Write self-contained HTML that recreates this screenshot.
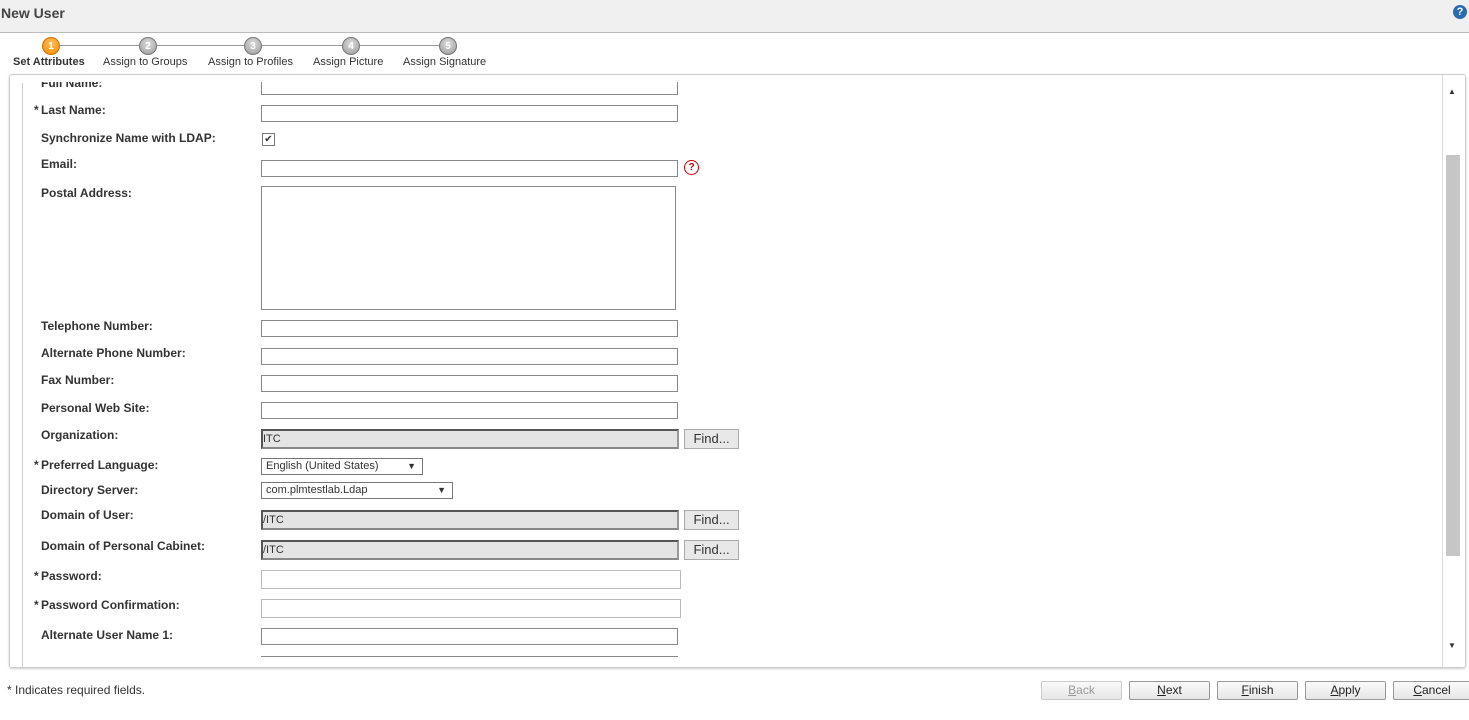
<!DOCTYPE html><html><head><style>
body{margin:0;width:1469px;height:720px;background:#fff;font-family:"Liberation Sans",Arial,sans-serif;position:relative;overflow:hidden;color:#333}
.a{position:absolute}
.hdr{left:0;top:0;width:1469px;height:32px;background:#f0f0f0;border-bottom:1px solid #bbb}
.l{position:absolute;left:41px;font-size:12px;font-weight:bold;color:#333}
.req::before{content:"*";position:absolute;left:-7px;font-weight:bold}
.i{position:absolute;left:261px;width:415px;height:15px;border:1px solid #888;background:#fff}
.g{position:absolute;left:261px;width:414px;height:16px;border:2px solid #555;border-right-color:#999;border-bottom-color:#888;background:#e4e4e4;font-size:11px;line-height:17px}
.f{position:absolute;left:684px;width:53px;height:18px;border:1px solid #aaa;background:#e8e8e8;font-size:13px;text-align:center;line-height:18px;color:#333}
.s{position:absolute;left:261px;height:15px;border:1px solid #777;background:#fff;font-size:11px;line-height:15px;padding-left:4px;box-sizing:content-box}
.s span{position:absolute;right:6px;font-size:9px}
.st{position:absolute;top:37px;width:18px;height:18px;border-radius:50%;background:radial-gradient(circle at 50% 35%,#ddd,#999);border:1px solid #777;font-size:10px;font-weight:bold;color:#fff;text-align:center;line-height:18px;box-sizing:border-box}
.sl{position:absolute;top:56px;font-size:11px;color:#333}
.b{position:absolute;top:681px;height:17px;width:79px;border:1px solid #999;border-radius:2px;background:linear-gradient(#fafafa,#e6e6e6);font-size:12px;text-align:center;line-height:17px;color:#222}
</style></head><body>
<div class="a hdr"></div>
<div class="a" style="left:1px;top:5px;font-size:14px;font-weight:bold;color:#444">New User</div>
<div class="a" style="left:1453px;top:5px;width:14px;height:14px;border-radius:50%;background:#2a6ab0;color:#fff;font-size:11px;font-weight:bold;text-align:center;line-height:14px">?</div>
<div class="a" style="left:52px;top:45px;width:395px;height:1px;background:#999"></div>
<div class="st" style="left:42px;background:radial-gradient(circle at 50% 35%,#ffc060,#f08a00);border-color:#d07000">1</div>
<div class="st" style="left:139px">2</div>
<div class="st" style="left:244px">3</div>
<div class="st" style="left:342px">4</div>
<div class="st" style="left:439px">5</div>
<div class="sl" style="left:13px;font-weight:bold">Set Attributes</div>
<div class="sl" style="left:103px">Assign to Groups</div>
<div class="sl" style="left:208px">Assign to Profiles</div>
<div class="sl" style="left:313px">Assign Picture</div>
<div class="sl" style="left:403px">Assign Signature</div>
<div class="a" style="left:9px;top:74px;width:1455px;height:592px;border:1px solid #ccc;border-radius:3px;box-shadow:0 1px 2px #ccc;overflow:hidden">
 <div class="a" style="left:12px;top:8px;width:1px;height:584px;background:#ccc"></div>
 <div class="a" style="left:1432px;top:0;width:22px;height:592px;background:#fff;border-left:1px solid #ddd"></div>
 <div class="a" style="left:1436px;top:80px;width:14px;height:401px;background:#c6c6c6"></div>
 <div class="a" style="left:1438px;top:12px;font-size:8px">▲</div>
 <div class="a" style="left:1438px;top:566px;font-size:8px">▼</div>
</div>
<div class="a" style="left:23px;top:82px;width:1410px;height:575px;overflow:hidden">
<div style="position:absolute;left:-23px;top:-82px;width:1469px;height:720px">
<div class="l" style="top:76px">Full Name:</div><div class="i" style="top:78px"></div>
<div class="l req" style="top:103px">Last Name:</div><div class="i" style="top:105px"></div>
<div class="l" style="top:131px">Synchronize Name with LDAP:</div>
<div class="a" style="left:262px;top:133px;width:11px;height:11px;border:1px solid #777;font-size:10px;line-height:11px;text-align:center">✔</div>
<div class="l" style="top:157px">Email:</div><div class="i" style="top:160px"></div>
<div class="a" style="left:684px;top:160px;width:13px;height:13px;border-radius:50%;border:1px solid #c00;color:#c00;font-size:10px;font-weight:bold;text-align:center;line-height:13px">?</div>
<div class="l" style="top:186px">Postal Address:</div><div class="i" style="top:186px;height:122px;width:413px"></div>
<div class="l" style="top:319px">Telephone Number:</div><div class="i" style="top:320px"></div>
<div class="l" style="top:346px">Alternate Phone Number:</div><div class="i" style="top:348px"></div>
<div class="l" style="top:373px">Fax Number:</div><div class="i" style="top:375px"></div>
<div class="l" style="top:401px">Personal Web Site:</div><div class="i" style="top:402px"></div>
<div class="l" style="top:428px">Organization:</div><div class="g" style="top:429px">ITC</div><div class="f" style="top:429px">Find...</div>
<div class="l req" style="top:458px">Preferred Language:</div><div class="s" style="top:458px;width:156px">English (United States)<span>▼</span></div>
<div class="l" style="top:483px">Directory Server:</div><div class="s" style="top:482px;width:186px">com.plmtestlab.Ldap<span>▼</span></div>
<div class="l" style="top:508px">Domain of User:</div><div class="g" style="top:510px">/ITC</div><div class="f" style="top:510px">Find...</div>
<div class="l" style="top:539px">Domain of Personal Cabinet:</div><div class="g" style="top:540px">/ITC</div><div class="f" style="top:540px">Find...</div>
<div class="l req" style="top:569px">Password:</div><div class="i" style="top:570px;width:418px;border-color:#bbb;height:17px"></div>
<div class="l req" style="top:598px">Password Confirmation:</div><div class="i" style="top:599px;width:418px;border-color:#bbb;height:17px"></div>
<div class="l" style="top:628px">Alternate User Name 1:</div><div class="i" style="top:628px"></div>
<div class="l" style="top:655px">Alternate User Name 2:</div><div class="i" style="top:656px"></div>
</div></div>
<div class="a" style="left:7px;top:683px;font-size:12px;color:#333">* Indicates required fields.</div>
<div class="b" style="left:1041px;color:#999;border-color:#ccc"><u>B</u>ack</div>
<div class="b" style="left:1129px"><u>N</u>ext</div>
<div class="b" style="left:1217px"><u>F</u>inish</div>
<div class="b" style="left:1305px"><u>A</u>pply</div>
<div class="b" style="left:1393px;width:76px"><u>C</u>ancel</div>
</body></html>
